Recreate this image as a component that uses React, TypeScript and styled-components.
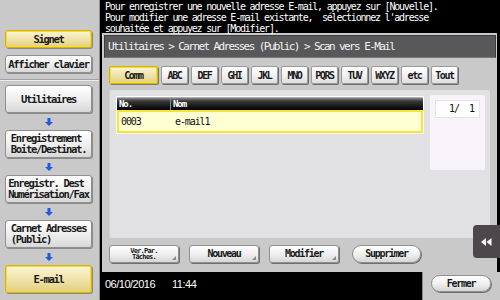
import styled, { createGlobalStyle } from "styled-components";

const GlobalStyle = createGlobalStyle`
  html, body {
    margin: 0;
    padding: 0;
  }
  body {
    width: 500px;
    height: 300px;
    overflow: hidden;
    background: #000;
  }
  * {
    box-sizing: border-box;
  }
`;

const mono = `"DejaVu Sans Mono", "Liberation Mono", monospace`;

const Screen = styled.div`
  position: relative;
  display: flex;
  width: 500px;
  height: 300px;
  background: #000;
  font-family: ${mono};
`;

const Sidebar = styled.div`
  display: flex;
  flex-direction: column;
  width: 100px;
  padding: 30px 7px 0 5px;
  background: #c9c9c9;
  border-right: 1px solid #8e8e8e;
`;

const SideButton = styled.div<{ $active?: boolean; $tall?: boolean }>`
  display: flex;
  align-items: center;
  justify-content: center;
  height: ${(p) => (p.$tall ? "28px" : "18px")};
  border-radius: 3px;
  border: 1px solid ${(p) => (p.$active ? "#d6b400" : "#8f8f8f")};
  background: ${(p) =>
    p.$active
      ? "linear-gradient(#fbf5d6, #efe2a6 55%, #e2cf80)"
      : "linear-gradient(#ffffff, #ededed 55%, #d8d8d8)"};
  box-shadow: ${(p) =>
    p.$active
      ? "inset 0 0 0 1px #f6dc3a, 1px 1px 0 #8a8a8a"
      : "1px 1px 0 #8a8a8a"};
  color: #1a1a1a;
  font-size: 10.5px;
  font-weight: bold;
  letter-spacing: -1.3px;
  line-height: 11px;
  white-space: pre;
`;

const SideLabel = styled.span`
  display: inline-block;
  text-align: left;
`;

const Separator = styled.div`
  height: 2px;
  margin: 6px -7px 4px -5px;
  border-top: 1px solid #a2a2a2;
  border-bottom: 1px solid #ececec;
`;

const ArrowSlot = styled.div`
  display: flex;
  align-items: center;
  justify-content: center;
  height: 17px;
`;

const Main = styled.div`
  display: flex;
  flex: 1;
  flex-direction: column;
  min-width: 0;
`;

const Message = styled.div`
  position: relative;
  z-index: 1;
  height: 33px;
  padding: 1px 0 0 5px;
  color: #fff;
  font-size: 10px;
  letter-spacing: -1.2px;
  line-height: 11px;
  white-space: pre;
`;

const Panel = styled.div`
  display: flex;
  flex: 1;
  flex-direction: column;
  margin: 0 3px 0 2px;
  padding: 2px 1px 0 2px;
  background: #c9c9c9;
`;

const Breadcrumb = styled.div`
  height: 23px;
  padding-left: 3px;
  background: #58585a;
  border: 1px solid #3c3c3c;
  border-bottom-color: #777;
  color: #f2f2f2;
  font-size: 11px;
  letter-spacing: -1.6px;
  line-height: 21px;
  white-space: pre;
`;

const Body = styled.div`
  display: flex;
  flex: 1;
  flex-direction: column;
  padding: 0 6px 0 5px;
`;

const Tabs = styled.div`
  display: flex;
  gap: 3px;
  margin-top: 8px;
`;

const Tab = styled.div<{ $active?: boolean; $wide?: boolean }>`
  display: flex;
  align-items: center;
  justify-content: center;
  width: ${(p) => (p.$wide ? "49px" : "27px")};
  height: 18px;
  border-radius: 2px;
  border: 1px solid ${(p) => (p.$active ? "#d6b400" : "#9a9a9a")};
  background: ${(p) =>
    p.$active
      ? "linear-gradient(#fbf5d6, #efe2a6 55%, #e2cf80)"
      : "linear-gradient(#ffffff, #f0f0f0 55%, #dedede)"};
  box-shadow: ${(p) =>
    p.$active
      ? "inset 0 0 0 1px #f6dc3a, 1px 1px 0 #7a7a7a"
      : "1px 1px 0 #6e6e6e"};
  color: #1a1a1a;
  font-size: 10px;
  font-weight: bold;
  letter-spacing: -1.4px;
`;

const ListArea = styled.div`
  display: flex;
  gap: 6px;
  height: 148px;
  margin-top: 6px;
  padding: 5px 5px 0 6px;
  background: #e1e0e2;
  border-left: 1px solid #d2d2d2;
  border-radius: 2px;
`;

const TableWrap = styled.div`
  align-self: flex-start;
  width: 308px;
  margin-top: 1px;
  padding: 1px;
  background: #fff;
`;

const HeadRow = styled.div`
  display: flex;
  height: 13px;
  background: linear-gradient(#8a8a8a, #3a3a3a 25%, #000);
  border-top: 1px solid #b0b0b0;
  color: #fff;
  font-size: 9px;
  font-weight: bold;
  letter-spacing: -1.1px;
  line-height: 12px;
`;

const Cell = styled.div<{ $w?: number }>`
  width: ${(p) => (p.$w ? `${p.$w}px` : "auto")};
  flex: ${(p) => (p.$w ? "none" : 1)};
  padding-left: 2px;
`;

const HeadCell = styled(Cell)`
  border-right: ${(p) => (p.$w ? "1px solid #8a8a8a" : "none")};
`;

const DataRow = styled.div`
  display: flex;
  align-items: center;
  height: 23px;
  background: #ffffd4;
  border: 2px solid #f7e33a;
  color: #111;
  font-size: 10px;
  letter-spacing: -1.1px;
`;

const Pager = styled.div`
  width: 55px;
  height: 75px;
  padding: 5px;
  background: #f8f3f8;
  border-radius: 2px;
`;

const PageBox = styled.div`
  height: 18px;
  padding-right: 5px;
  background: #fff;
  border: 1px solid #e6e2e6;
  color: #111;
  font-size: 10px;
  letter-spacing: -1px;
  line-height: 16px;
  text-align: right;
  white-space: pre;
`;

const Actions = styled.div`
  display: flex;
  gap: 10px;
  margin-top: 7px;
`;

const ActionButton = styled.div<{ $pill?: boolean; $small?: boolean }>`
  position: relative;
  display: flex;
  align-items: center;
  justify-content: center;
  width: ${(p) => (p.$pill ? "69px" : "70px")};
  height: 18px;
  margin-left: ${(p) => (p.$pill ? "3px" : "0")};
  border-radius: ${(p) => (p.$pill ? "9px" : "3px")};
  border: 1px solid #8f8f8f;
  background: linear-gradient(#ffffff, #eeeeee 55%, #d6d6d6);
  box-shadow: 1px 1px 0 #707070;
  color: #1a1a1a;
  font-size: ${(p) => (p.$small ? "7px" : "10px")};
  font-weight: bold;
  letter-spacing: ${(p) => (p.$small ? "-0.8px" : "-1.3px")};
  line-height: ${(p) => (p.$small ? "6px" : "12px")};
  text-align: center;
  white-space: pre;

  &::after {
    content: "";
    display: ${(p) => (p.$pill ? "none" : "block")};
    position: absolute;
    right: 2px;
    bottom: 2px;
    border-left: 4px solid transparent;
    border-bottom: 4px solid #8a8a8a;
  }
`;

const Footer = styled.div`
  display: flex;
  justify-content: space-between;
  height: 28px;
`;

const DateText = styled.div`
  padding: 5px 0 0 5px;
  color: #fff;
  font-family: "Liberation Sans", Arial, sans-serif;
  font-size: 11px;
  letter-spacing: -0.5px;
  line-height: 14px;

  span + span {
    margin-left: 17px;
  }
`;

const FooterTab = styled.div`
  width: 78px;
  padding: 3px 0 0 8px;
  background: #c9c9c9;
  border-left: 1px solid #8e8e8e;
`;

const CloseButton = styled.div`
  display: flex;
  align-items: center;
  justify-content: center;
  width: 60px;
  height: 17px;
  border-radius: 9px;
  border: 1px solid #8f8f8f;
  background: linear-gradient(#ffffff, #eeeeee 55%, #d6d6d6);
  box-shadow: 1px 1px 0 #707070;
  color: #1a1a1a;
  font-size: 10px;
  font-weight: bold;
  letter-spacing: -1.3px;
`;

const CollapseTab = styled.div`
  position: absolute;
  top: 225px;
  right: 0;
  display: flex;
  align-items: center;
  justify-content: center;
  width: 27px;
  height: 33px;
  background: #4b474a;
  border-radius: 4px 0 0 4px;
`;

const DownArrow = () => (
  <svg width="8" height="8" viewBox="0 0 8 8">
    <path d="M2.5 0h3v4h2.5L4 8 0 4h2.5z" fill="#1f5be0" />
  </svg>
);

const RewindIcon = () => (
  <svg width="11" height="8" viewBox="0 0 11 8">
    <path d="M5 0v8L0 4zM10.5 0v8L5.5 4z" fill="#fff" />
  </svg>
);

const navSteps = [
  "Utilitaires",
  "Enregistrement\nBoite/Destinat.",
  "Enregistr. Dest\nNumérisation/Fax",
  "Carnet Adresses\n(Public)",
];

const letterTabs = ["ABC", "DEF", "GHI", "JKL", "MNO", "PQRS", "TUV", "WXYZ", "etc", "Tout"];

const message =
  "Pour enregistrer une nouvelle adresse E-mail, appuyez sur [Nouvelle].\n" +
  "Pour modifier une adresse E-mail existante,  sélectionnez l'adresse\n" +
  "souhaitée et appuyez sur [Modifier].";

function App() {
  return (
    <>
      <GlobalStyle />
      <Screen>
        <Sidebar>
          <SideButton $active>Signet</SideButton>
          <SideButton style={{ marginTop: 7 }}>Afficher clavier</SideButton>
          <Separator />
          {navSteps.map((step) => (
            <div key={step}>
              <SideButton $tall>
                <SideLabel>{step}</SideLabel>
              </SideButton>
              <ArrowSlot>
                <DownArrow />
              </ArrowSlot>
            </div>
          ))}
          <SideButton $tall $active>
            E-mail
          </SideButton>
        </Sidebar>

        <Main>
          <Message>{message}</Message>
          <Panel>
            <Breadcrumb>Utilitaires &gt; Carnet Adresses (Public) &gt; Scan vers E-Mail</Breadcrumb>
            <Body>
              <Tabs>
                <Tab $active $wide>
                  Comm
                </Tab>
                {letterTabs.map((t) => (
                  <Tab key={t}>{t}</Tab>
                ))}
              </Tabs>
              <ListArea>
                <TableWrap>
                  <HeadRow>
                    <HeadCell $w={54}>No.</HeadCell>
                    <HeadCell>Nom</HeadCell>
                  </HeadRow>
                  <DataRow>
                    <Cell $w={54}>0003</Cell>
                    <Cell>e-mail1</Cell>
                  </DataRow>
                </TableWrap>
                <Pager>
                  <PageBox>{"1/  1"}</PageBox>
                </Pager>
              </ListArea>
              <Actions>
                <ActionButton $small>{"Ver.Par.\nTâches."}</ActionButton>
                <ActionButton>Nouveau</ActionButton>
                <ActionButton>Modifier</ActionButton>
                <ActionButton $pill>Supprimer</ActionButton>
              </Actions>
            </Body>
          </Panel>
          <Footer>
            <DateText>
              <span>06/10/2016</span>
              <span>11:44</span>
            </DateText>
            <FooterTab>
              <CloseButton>Fermer</CloseButton>
            </FooterTab>
          </Footer>
        </Main>

        <CollapseTab>
          <RewindIcon />
        </CollapseTab>
      </Screen>
    </>
  );
}

export default App;
